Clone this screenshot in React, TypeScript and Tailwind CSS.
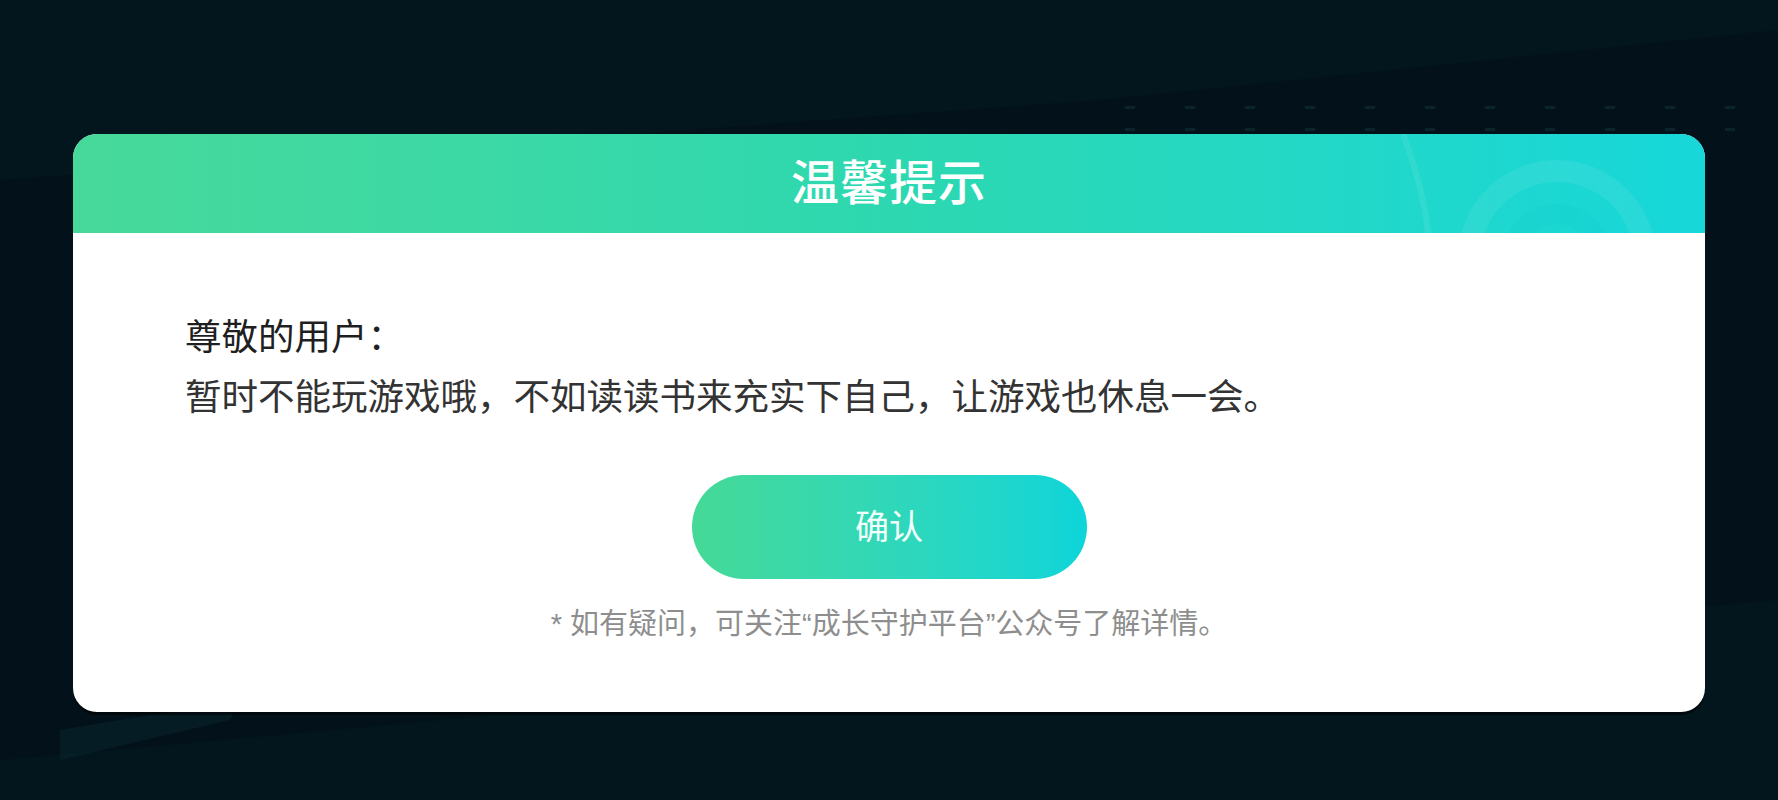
export default function App() {
  return (
    <div
      className="relative h-[800px] w-full overflow-hidden bg-[#03121a]"
      style={{ fontFamily: '"Liberation Sans", "Noto Sans CJK SC", sans-serif' }}
    >
      {/* 背景の斜めの模様 */}
      <svg
        className="absolute inset-0 h-full w-full"
        viewBox="0 0 1778 800"
        preserveAspectRatio="none"
      >
        <polygon points="0,0 1778,0 1778,30 1100,100 0,180" fill="#04161d" />
        <polygon points="0,760 1778,600 1778,800 0,800" fill="#03161d" />
        <polygon points="60,730 240,700 230,720 60,760" fill="#0a2530" opacity="0.5" />
        {Array.from({ length: 12 }).map((_, i) => (
          <g key={i} fill="#0b242c">
            <rect x={1125 + i * 60} y={106} width={10} height={3} />
            <rect x={1125 + i * 60} y={128} width={10} height={3} />
          </g>
        ))}
      </svg>

      <div className="relative px-[73px] pt-[134px]">
        <div className="h-[578px] overflow-hidden rounded-[24px] bg-white shadow-[0_3px_0_rgba(0,0,0,0.55)]">
          <div className="relative flex h-[99px] items-center justify-center overflow-hidden bg-gradient-to-r from-[#47d99a] via-[#2dd8b0] to-[#17d7da]">
            <svg className="absolute left-0 top-0 h-[99px] w-full" viewBox="0 0 1632 99" preserveAspectRatio="none">
              <path d="M1330 0 C1345 40 1352 70 1355 99" stroke="#ffffff" strokeOpacity="0.08" strokeWidth="6" fill="none" />
              <circle cx="1484" cy="125" r="88" stroke="#ffffff" strokeOpacity="0.07" strokeWidth="22" fill="none" />
              <circle cx="1484" cy="125" r="45" stroke="#00bfc8" strokeOpacity="0.1" strokeWidth="20" fill="none" />
            </svg>
            <h1 className="relative text-[48px] font-medium leading-none tracking-[1px] text-white">温馨提示</h1>
          </div>

          <div className="flex flex-col">
            <div className="pl-[112px] pt-[75px] text-[36.5px] leading-[60px]">
              <p className="text-[#1f1f1f]">尊敬的用户：</p>
              <p className="text-[#333333]">暂时不能玩游戏哦，不如读读书来充实下自己，让游戏也休息一会。</p>
            </div>

            <div className="mt-[47px] flex justify-center">
              <button className="flex h-[104px] w-[395px] items-center justify-center rounded-full bg-gradient-to-r from-[#45d996] to-[#0cd5d9] text-[34px] text-[#f2fffb]">
                确认
              </button>
            </div>

            <p className="mt-[25px] text-center text-[29px] leading-[40px] text-[#8e8e8e]">
              * 如有疑问，可关注“成长守护平台”公众号了解详情。
            </p>
          </div>
        </div>
      </div>
    </div>
  );
}
